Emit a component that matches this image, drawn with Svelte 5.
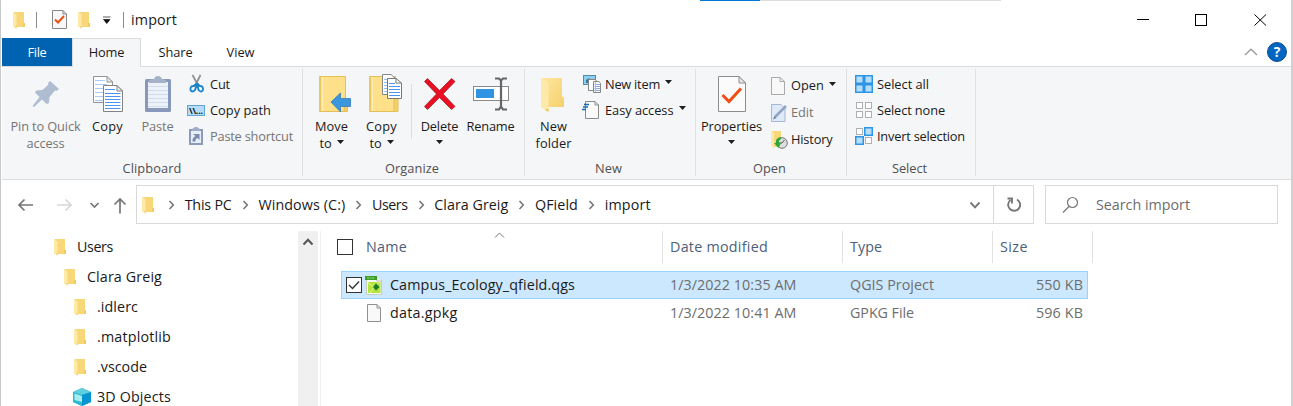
<script>
  // Spreads a label over its design width so columns and buttons line up.
  function fit(node, width) {
    const natural = node.getBoundingClientRect().width;
    const gaps = Math.max(1, node.textContent.length);
    node.style.letterSpacing = `${(width - natural) / gaps}px`;
    node.style.width = `${width}px`;
  }

  const tabs = [
    { t: 'File', w: 19, box: 70, cls: 'file' },
    { t: 'Home', w: 35.5, box: 69, cls: 'home' },
    { t: 'Share', w: 34, box: 69, cls: '' },
    { t: 'View', w: 28, box: 61, cls: '' }
  ];

  const groups = [
    {
      name: 'Clipboard', w: 59, box: 301, pad: 5, gap: 5,
      big: [
        { icon: 'pin', box: 76, lines: [['Pin to Quick', 70], ['access', 38]], off: true },
        { icon: 'copy', box: 48, lines: [['Copy', 31]] },
        { icon: 'paste', box: 52, lines: [['Paste', 32]], off: true }
      ],
      small: [
        { icon: 'cut', t: 'Cut', w: 20 },
        { icon: 'path', t: 'Copy path', w: 61 },
        { icon: 'shortcut', t: 'Paste shortcut', w: 83, off: true }
      ]
    },
    {
      name: 'Organize', w: 54, box: 222, pad: 3, gap: 0,
      big: [
        { icon: 'move', box: 50, lines: [['Move', 33], ['to', 12]], drop: true },
        { icon: 'copyto', box: 50, lines: [['Copy', 31], ['to', 12]], drop: true, rule: true },
        { icon: 'delete', box: 54, lines: [['Delete', 37.5]], drop: true },
        { icon: 'rename', box: 48, lines: [['Rename', 48]] }
      ],
      small: []
    },
    {
      name: 'New', w: 27, box: 171, pad: 3, gap: 5,
      big: [{ icon: 'folder', box: 50, lines: [['New', 27], ['folder', 36]] }],
      small: [
        { icon: 'newitem', t: 'New item', w: 55, drop: true },
        { icon: 'easy', t: 'Easy access', w: 68.5, drop: true }
      ]
    },
    {
      name: 'Open', w: 33, box: 151, pad: 2, gap: 5, pitch: 27, shift: 1,
      big: [{ icon: 'props', box: 66, lines: [['Properties', 61]], drop: true }],
      small: [
        { icon: 'page', t: 'Open', w: 33, drop: true },
        { icon: 'edit', t: 'Edit', w: 22.5, off: true },
        { icon: 'history', t: 'History', w: 41.5 }
      ]
    },
    {
      name: 'Select', w: 35, box: 129, pad: 0, gap: 8,
      big: [],
      small: [
        { icon: 'all', t: 'Select all', w: 52 },
        { icon: 'none', t: 'Select none', w: 68 },
        { icon: 'invert', t: 'Invert selection', w: 88 }
      ]
    }
  ];

  const crumbs = [
    ['This PC', 47], ['Windows (C:)', 87], ['Users', 35.5],
    ['Clara Greig', 74], ['QField', 43], ['import', 46]
  ];

  const tree = [
    { t: 'Users', w: 36, indent: 47 },
    { t: 'Clara Greig', w: 75, indent: 57 },
    { t: '.idlerc', w: 41, indent: 67 },
    { t: '.matplotlib', w: 74, indent: 67 },
    { t: '.vscode', w: 50, indent: 67 },
    { t: '3D Objects', w: 74, indent: 67, cube: true }
  ];

  const files = [
    { name: ['Campus_Ecology_qfield.qgs', 185], date: '1/3/2022 10:35 AM', type: ['QGIS Project', 84], size: '550 KB', on: true },
    { name: ['data.gpkg', 67.5], date: '1/3/2022 10:41 AM', type: ['GPKG File', 64], size: '596 KB' }
  ];
</script>

{#snippet miniFolder()}
  <svg class="mini" width="20" height="20" viewBox="0 0 20 20">
    <path d="M6 2H16V14H17V17H6Z" fill="#f8d778" />
    <path d="M15 13h2v4h-2z" fill="#f1cb60" />
    <path d="M5 2L8.5 4.5V18.5L5 16.5Z" fill="#ffe9a6" />
    <path d="M7 17L8.5 18.7V16Z" fill="#eec65e" />
  </svg>
{/snippet}

{#snippet arrow()}
  <svg class="arrow" width="7" height="4" viewBox="0 0 7 4"><path d="M0 0H7L3.5 4Z" fill="#1e1e1e" /></svg>
{/snippet}

{#snippet chevron()}
  <svg class="chev" width="26.7" height="12" viewBox="0 0 26.7 12"><path d="M11.500 2L15.300 6L11.500 10" fill="none" stroke="#777" stroke-width="1.600" /></svg>
{/snippet}

{#snippet bigIcon(name)}
  <svg class="bigicon" width="40" height="37" viewBox="0 0 40 37">
    {#if name === 'pin'}
      <path d="M25 6L34 14L31.500 16L30 15.500L24.500 22L24 28L21.500 29L17 24.500L9 32L7.500 31L14.500 22L10 17.500L11 15.500L17.500 15L23.500 9.500L23 8Z" fill="#aebdd2" />
    {:else if name === 'copy'}
      <path d="M6.500 1.500H20L25.500 7V27.500H6.500Z" fill="#fff" stroke="#949494" />
      <path d="M8 5.500H18M8 9.500H20M8 13.500H18M8 17.500H18M8 21.500H18M8 25.500H18" stroke="#a9c9f7" />
      <path d="M20 1.500V7H25.500Z" fill="#eee" stroke="#949494" />
      <path d="M16.500 10.500H30L35.500 16V36.500H16.500Z" fill="#fff" stroke="#838383" />
      <path d="M18 14.500H28M18 18.500H33.500M18 21.500H33.500M18 24.500H33.500M18 27.500H33.500M18 30.500H33.500M18 33.500H33.500" stroke="#4e94ee" />
      <path d="M30 10.500V16H35.500Z" fill="#eee" stroke="#838383" />
    {:else if name === 'paste'}
      <rect x="8" y="4" width="26" height="33" rx="1.500" fill="#8798ba" />
      <path d="M11 7H31V33H11Z" fill="#edf2fa" />
      <path d="M11 11.500H31M11 15.500H31M11 19.500H31M11 23.500H31M11 27.500H31M11 31.500H31" stroke="#cfddec" />
      <path d="M12 8V5L17 4Q18 1 21 1T25 4L29 5V8Z" fill="#a5b2c9" />
    {:else if name === 'move' || name === 'copyto'}
      <path d="M8.500 1.500H34.500V36.500H8.500Z" fill="#ffe08a" stroke="#e4bf55" />
      <path d="M11.500 2V36" stroke="#fff0b8" />
      <path d="M9 1.500V36.500" stroke="#ecc75e" stroke-width="2" />
      {#if name === 'move'}
        <path d="M34 24H36.500V36.500H33Z" fill="#f5cf69" stroke="#e4bf55" />
        <path d="M20 27L29.500 18V23.500H39.500V31.500H29.500V37Z" fill="#3a96dd" stroke="#327fbd" stroke-width=".8" />
      {:else}
        <path d="M33 36.500V25Q35 22 37 24V36.500Z" fill="#f5cf69" stroke="#e4bf55" />
      {/if}
    {:else if name === 'delete'}
      <path d="M5.500 6.500L8.500 3.500L20.500 15.500L32.500 3.500L36 6.500L24 19L36 31.500L32.500 34.500L20.500 22.500L8.500 34.500L5.500 31.500L17.500 19Z" fill="#e81123" stroke="#a60b17" stroke-width=".7" />
    {:else if name === 'rename'}
      <rect x="3.500" y="11.500" width="35" height="14" fill="#fff" stroke="#8a8a8a" />
      <rect x="6" y="14" width="18" height="9" fill="#3094e3" />
      <path d="M25 3.500H29L31 5.500L33 3.500H37M31 5V32M25 34.500H29L31 31.500L33 34.500H37" fill="none" stroke="#666" stroke-width="2.200" />
    {:else if name === 'folder'}
      <defs><linearGradient id="fold" x2="1" y2="1"><stop stop-color="#ffe8a2" /><stop offset="1" stop-color="#f5cf6b" /></linearGradient></defs>
      <path d="M9 3H29V21L31 23V32H9Z" fill="url(#fold)" />
      <path d="M8 3L15.500 8V37L8 32.500Z" fill="#ffe9a8" />
      <path d="M12 35L15.500 37V33Z" fill="#edc767" />
    {:else if name === 'props'}
      <path d="M7.500 1.500H28L34.500 8V36.500H7.500Z" fill="#fbfbfb" stroke="#8d8d8d" />
      <path d="M28 1.500V8H34.500Z" fill="#e8e8e8" stroke="#8d8d8d" />
      <path d="M11.500 20L18 26.500L30 13.500" fill="none" stroke="#f04e12" stroke-width="3" />
    {/if}
    {#if name === 'copyto'}
      <path d="M21.500 -.5H30L35 4V19.500H21.500Z" fill="#fff" stroke="#888" />
      <path d="M23 4.500H28M23 7.500H26M23 10.500H26M23 13.500H26M23 16.500H26" stroke="#94bff5" />
      <path d="M26.500 3.500H35L40.500 8V23.500H26.500Z" fill="#fff" stroke="#777" />
      <path d="M28 8.500H34M28 11.500H39M28 14.500H39M28 17.500H39M28 20.500H39" stroke="#4e94ee" />
      <path d="M35 3.500V8H40.500" fill="none" stroke="#777" />
    {/if}
  </svg>
{/snippet}

{#snippet smallIcon(name)}
  <svg class="smallicon" width="18" height="18" viewBox="0 0 18 18">
    {#if name === 'cut'}
      <path d="M4.500 0L11 12M12.500 0L6.500 12" stroke="#929292" stroke-width="1.800" />
      <path d="M9 8.500L5.500 11Q2 11 2.500 15Q4 18 7 15Q8 12 9 10Q10 12 10.500 15Q13 18 15 15Q15.500 11 12 11Z" fill="none" stroke="#1683ce" stroke-width="1.800" />
    {:else if name === 'path'}
      <rect x="-.5" y="4.500" width="17" height="10" fill="#b5ddfb" stroke="#62a3d4" />
      <text x="1" y="12.500" font-size="9" font-weight="700" textLength="14" fill="#111">\\...</text>
    {:else if name === 'shortcut'}
      <path d="M1 2H15V18H1Z" fill="#8c9bb9" /><path d="M3 4H13V16H3Z" fill="#e8eef7" />
      <path d="M4 4V2L7 0H9L12 2V4Z" fill="#a0aec8" />
      <path d="M5 7H11.500V13L9.500 11Q7 12 7.500 14.500H4.500Q4 11 7.500 9Z" fill="#798aae" />
    {:else if name === 'newitem'}
      <rect x=".5" y=".5" width="12" height="9" fill="#8fd0ef" stroke="#4e8da8" /><path d="M3 8V5L6 3L9 8Z" fill="#2e7d93" />
      <path d="M5.500 4.500H12L14 6.500V15.500H5.500Z" fill="#fff" stroke="#888" />
      <path d="M10.500 6.500H16L17.500 8.500V17.500H10.500Z" fill="#fff" stroke="#888" />
      <path d="M11.500 9.500H17M11.500 11.500H17M11.500 13.500H17M11.500 15.500H17" stroke="#8ca9e9" /><path d="M12.500 7V17" stroke="#f3a7a7" />
    {:else if name === 'easy'}
      <path d="M2.500 .5H12L15.500 4V17.500H2.500Z" fill="#fafafa" stroke="#8b8b8b" /><path d="M12 .5V4H15.500" fill="none" stroke="#8b8b8b" />
      <path d="M1 3.500H6M0 6H5M-1 8.500H3" stroke="#1769b5" stroke-width="1.400" />
    {:else if name === 'page'}
      <path d="M2.500 .5H11L15.500 4.500V17.500H2.500Z" fill="#f8f8f8" stroke="#aaa" /><path d="M11 .5V4.500H15.500" fill="none" stroke="#aaa" />
    {:else if name === 'edit'}
      <path d="M2.500 .5H12L16 4.500V17.500H2.500Z" fill="#dfe9f7" stroke="#a6b7d0" /><path d="M6 13L17 2" stroke="#91a4c4" stroke-width="2.500" /><path d="M4 15.500L7.500 14L5.500 12Z" fill="#6d83aa" />
    {:else if name === 'history'}
      <path d="M3 0H12V16H3Z" fill="#f8d778" /><path d="M2 0L5 2V17L2 15Z" fill="#ffe9a6" />
      <circle cx="13" cy="12" r="5.300" fill="#ddd" stroke="#777" /><path d="M13 12L15.500 9M13 12H10" stroke="#555" />
      <path d="M12 6Q6 7 7 12L5 12L9.500 17L12 12H10Q9.500 9 12 8Z" fill="#2aa63a" />
    {:else}
      {#each [0, 1, 2, 3] as i}
        {@const on = name === 'all' || (name === 'invert' && (i === 1 || i === 2))}
        <rect x={(i % 2) * 9 + (on ? 0.75 : 1.5)} y={Math.floor(i / 2) * 9 + (on ? 0.75 : 1.5)} width={on ? 7.5 : 6} height={on ? 7.5 : 6} fill={on ? '#b5dffd' : '#fff'} stroke={on ? '#2e94e4' : '#b0b0b0'} stroke-width={on ? 1.5 : 1} />
      {/each}
    {/if}
  </svg>
{/snippet}

<div class="window">
  <i class="accent"></i>
  <header class="title">
    {@render miniFolder()}
    <i class="bar b1"></i>
    <svg class="check" width="15" height="19" viewBox="0 0 15 19">
      <path d="M.5 .5H11L14.500 4V18.500H.5Z" fill="#f8f8f8" stroke="#888" /><path d="M11 .5V4H14.500" fill="none" stroke="#888" />
      <path d="M3 9.500L6 12.500L12 6" fill="none" stroke="#f04e12" stroke-width="2" />
    </svg>
    {@render miniFolder()}
    <svg class="custom" width="8" height="8" viewBox="0 0 8 8"><path d="M0 1H7.500M.5 3.500H7L3.800 7.500Z" fill="#111" stroke="#111" stroke-width=".7" /></svg>
    <i class="bar b2"></i>
    <span class="t" use:fit={46}>import</span>
    <svg class="controls" width="140" height="20" viewBox="0 0 140 20" fill="none" stroke="#000">
      <path d="M7 9.500H19M124.500 4.500L136 15.500M136 4.500L124.500 15.500" /><rect x="65.500" y="4.500" width="11" height="11" />
    </svg>
  </header>

  <nav class="tabs">
    {#each tabs as tab}
      <div class="tab {tab.cls}" style="width:{tab.box}px"><span class="r" use:fit={tab.w}>{tab.t}</span></div>
    {/each}
    <div class="help">
      <svg width="14" height="8" viewBox="0 0 14 8"><path d="M1 7L7 1.200L13 7" fill="none" stroke="#9a9a9a" stroke-width="1.300" /></svg>
      <b>?</b>
    </div>
  </nav>

  <section class="ribbon">
    {#each groups as g}
      <div class="group" style="width:{g.box}px">
        <div class="tools" style="padding-left:{g.pad}px">
          {#each g.big as b}
            <div class="big" class:off={b.off} style="width:{b.box}px">
              {@render bigIcon(b.icon)}
              {#each b.lines as [text, w], i}
                <div class="line">
                  <span class="r" use:fit={w}>{text}</span>
                  {#if b.drop && i === 1}{@render arrow()}{/if}
                </div>
              {/each}
              {#if b.drop && b.lines.length === 1}<div class="line alone">{@render arrow()}</div>{/if}
            </div>
            {#if b.rule}<i class="rule"></i>{/if}
          {/each}
          <div class="smalls" style="padding-left:{g.gap}px;padding-top:{2 + (g.shift ?? 0)}px">
            {#each g.small as s}
              <div class="small" class:off={s.off} style="height:{g.pitch ?? 26}px">
                {@render smallIcon(s.icon)}
                <span class="r" use:fit={s.w}>{s.t}</span>
                {#if s.drop}{@render arrow()}{/if}
              </div>
            {/each}
          </div>
        </div>
        <div class="caption"><span class="r" use:fit={g.w}>{g.name}</span></div>
      </div>
    {/each}
  </section>

  <section class="address">
    <svg class="navs" width="122" height="20" viewBox="0 0 122 20" fill="none" stroke="#767676" stroke-width="1.700">
      <path d="M17 10H31M22.500 4.500L17 10L22.500 15.500" />
      <path d="M55 10H69M63.500 4.500L69 10L63.500 15.500" stroke="#d7d7d7" />
      <path d="M88.500 8L92.500 12L96.500 8" />
      <path d="M118 18.500V4M112.500 9.500L118 4L123.500 9.500" />
    </svg>
    <div class="pathbox">
      {@render miniFolder()}
      {#each crumbs as [text, w]}
        {@render chevron()}<span class="t" use:fit={w}>{text}</span>
      {/each}
      <svg class="drop" width="12" height="8" viewBox="0 0 12 8"><path d="M1.500 1.500L6 6.300L10.500 1.500" fill="none" stroke="#777" stroke-width="1.900" /></svg>
      <div class="refresh">
        <svg width="16" height="18" viewBox="0 0 16 18" fill="none" stroke="#777" stroke-width="1.900"><path d="M11 3.500A6 6 0 1 1 4.500 4M1.500 2.500H6V7.500" /></svg>
      </div>
    </div>
    <div class="search">
      <svg width="17" height="18" viewBox="0 0 17 18" fill="none" stroke="#777" stroke-width="1.200"><circle cx="10.500" cy="6.500" r="5" /><path d="M7 10.500L1 16.500" /></svg>
      <span class="t" use:fit={94}>Search import</span>
    </div>
  </section>

  <main>
    <aside>
      <div class="tree">
        {#each tree as n}
          <div class="node" style="padding-left:{n.indent}px">
            {#if n.cube}
              <svg class="cube" width="20" height="20" viewBox="0 0 20 20">
                <path d="M1 5L10 1L19 5V15L10 19L1 15Z" fill="#1cb1d1" /><path d="M1 5L10 1L19 5L10 8Z" fill="#5fd0e0" /><path d="M10 8L19 5V15L10 19Z" fill="#0795d2" /><path d="M1 5L10 8V19L1 15Z" fill="#2bbbd3" /><path d="M2.500 6.500L10 9V15L2.500 13Z" fill="#a9ecf0" />
              </svg>
            {:else}{@render miniFolder()}{/if}
            <span class="t" use:fit={n.w}>{n.t}</span>
          </div>
        {/each}
      </div>
      <div class="scroll"><svg width="12" height="8" viewBox="0 0 12 8"><path d="M1.500 6.500L6 1.800L10.500 6.500" fill="none" stroke="#555" stroke-width="2" /></svg></div>
    </aside>
    <div class="list">
      <div class="head">
        <div class="c1"><i class="box"></i><span class="t" use:fit={41}>Name</span>
          <svg class="sort" width="11" height="6" viewBox="0 0 11 6"><path d="M1 5.500L5.500 1L10 5.500" fill="none" stroke="#777" /></svg>
        </div>
        <div class="c2"><span class="t" use:fit={98}>Date modified</span></div>
        <div class="c3"><span class="t" use:fit={32}>Type</span></div>
        <div class="c4"><span class="t" use:fit={28}>Size</span></div>
      </div>
      {#each files as f}
        <div class="file-row" class:on={f.on}>
          <div class="name">
            <i class="box" class:hidden={!f.on}>{#if f.on}<svg width="14" height="14" viewBox="0 0 14 14"><path d="M2 7L5.500 10.500L12 3.500" fill="none" stroke="#333" stroke-width="1.400" /></svg>{/if}</i>
            <svg class="ficon" width="18" height="20" viewBox="0 0 18 20">
              {#if f.on}
                <path d="M1.500 1.500H12L16.500 6V19.500H1.500Z" fill="#f7f9f5" stroke="#c5ccc1" /><path d="M12 1.500V6H16.500" fill="#fff" stroke="#bbb" />
                <path d="M0 1H12V5H0Z" fill="#3b9f24" /><path d="M2 3H10" stroke="#9fd58f" stroke-dasharray="2 .6" />
                <path d="M3 7H15.500V18H3Z" fill="#b7e33d" /><path d="M3 8L9 12L5 18M9 12L15 7" stroke="#dff59c" fill="none" />
                <path d="M11 8.500L14.500 12L11 15.500L8 12Z" fill="#188024" />
              {:else}
                <path d="M2.500 1.500H12L15.500 5V18.500H2.500Z" fill="#f9f9f9" stroke="#909090" /><path d="M12 1.500V5H15.500" fill="none" stroke="#909090" />
              {/if}
            </svg>
            <span class="t" use:fit={f.name[1]}>{f.name[0]}</span>
          </div>
          <div class="date"><span class="t" use:fit={126.5}>{f.date}</span></div>
          <div class="type"><span class="t" use:fit={f.type[1]}>{f.type[0]}</span></div>
          <div class="size"><span class="t" use:fit={47}>{f.size}</span></div>
        </div>
      {/each}
    </div>
  </main>
</div>

<style>
  :global(body) { background: #fff; overflow: hidden; }
  .window { box-sizing: border-box; position: relative; width: 1293px; height: 406px; overflow: hidden; display: flex; flex-direction: column; background: #fff; border-left: 1px solid #c9c9c9; border-right: 2px solid #d0d0d0; padding-left: 1px; font-family: "Open Sans", "Noto Sans", sans-serif; color: #1a1a1a; }
  svg { flex: none; display: block; }
  .accent { position: absolute; top: 0; left: 699px; width: 301px; height: 1px; background: linear-gradient(90deg, #0078d7 60px, #ddd 60px); }
  .t, .r { display: inline-block; white-space: nowrap; flex: none; }
  .t { font-size: 14.3px; line-height: 20px; }
  .r { font-size: 12.8px; line-height: 17px; }
  i { flex: none; display: block; }

  .title { height: 38px; flex: none; display: flex; align-items: center; padding-left: 6px; padding-top: 1px; box-sizing: border-box; }
  .bar { width: 1px; height: 16px; background: #8b8b8b; }
  .b1 { margin-left: 8px; }
  .check { margin: 0 6px 0 15px; }
  .custom { margin-left: 10px; }
  .b2 { margin: 0 7px 0 12px; }
  .controls { margin-left: auto; margin-right: 21px; }

  .tabs { height: 28px; flex: none; display: flex; }
  .tab { box-sizing: border-box; display: flex; align-items: center; justify-content: center; padding-top: 1px; }
  .tab.file { background: #0063b1; color: #fff; }
  .tab.home { background: #f5f6f7; border: 1px solid #dadbdc; border-bottom: 0; height: 29px; z-index: 1; padding: 0 0 1px; }
  .help { margin-left: auto; display: flex; align-items: center; gap: 9px; padding-right: 4px; }
  .help b { width: 18px; height: 18px; border-radius: 50%; background: #0066c4; border: 1px solid #174f86; color: #fff; font-size: 14px; line-height: 18px; text-align: center; }

  .ribbon { height: 112px; flex: none; display: flex; background: #f5f6f7; border-top: 1px solid #dadbdc; border-bottom: 1px solid #dadbdc; }
  .group { box-sizing: border-box; margin: 2px 0 3px; border-right: 1px solid #e0e1e2; display: flex; flex-direction: column; flex: none; }
  .tools { display: flex; height: 92px; flex: none; }
  .big { flex: none; display: flex; flex-direction: column; align-items: center; padding-top: 6px; }
  .bigicon { margin-bottom: 6px; overflow: visible; }
  .line { height: 17px; display: flex; align-items: center; justify-content: center; gap: 5px; padding-left: 1px; }
  .line .arrow { margin-bottom: 3px; }
  .off { color: #757575; }
  .rule { width: 1px; height: 55px; background: #dcdddf; margin: 15px 0 0 5px; }
  .small { display: flex; align-items: center; gap: 4px; }
  .small .arrow { margin-left: 1px; margin-bottom: 4px; }
  .smallicon { overflow: visible; }
  .smalls { box-sizing: border-box; }
  .caption { height: 15px; display: flex; align-items: center; justify-content: center; color: #505050; }
  .group + .group .caption { padding-right: 3px; }

  .address { height: 51px; flex: none; display: flex; box-sizing: border-box; padding-top: 5px; }
  .navs { margin: 10px 12px 0 0; overflow: visible; }
  .pathbox, .search { box-sizing: border-box; height: 39px; border: 1px solid #d9d9d9; display: flex; align-items: center; }
  .pathbox { width: 898px; }
  .pathbox .mini { margin-right: 1px; }
  .drop { margin-left: auto; margin-right: 12px; }
  .refresh { width: 39px; height: 37px; border-left: 1px solid #d9d9d9; display: flex; align-items: center; justify-content: center; }
  .search { width: 233px; margin-left: 11px; padding-left: 16px; gap: 17px; color: #6d6d6d; }

  main { flex: 1; display: flex; min-height: 0; }
  aside { width: 319px; flex: none; display: flex; border-right: 1px solid #f0f0f0; box-sizing: border-box; }
  .tree { width: 296px; padding-top: 1px; }
  .node { height: 30px; display: flex; align-items: center; gap: 8px; box-sizing: border-box; }
  .cube { margin: 0 -3px 0 3px; }
  .scroll { width: 20px; background: #f0f0f0; display: flex; justify-content: center; padding-top: 7px; box-sizing: border-box; }
  .list { flex: 1; }
  .head { display: flex; height: 32px; margin-bottom: 8px; color: #4c607a; }
  .head > div { box-sizing: border-box; border-right: 1px solid #e2e2e2; display: flex; align-items: center; padding-left: 7px; }
  .head .c1 { width: 342px; padding-left: 16px; position: relative; }
  .c1 .t { margin-left: 13px; }
  .sort { position: absolute; left: 173px; top: 1px; }
  .c2 { width: 180px; }
  .c3 { width: 150px; }
  .c4 { width: 100px; }
  .box { width: 14px; height: 14px; border: 1px solid #333; background: #fff; }
  .hidden { visibility: hidden; }
  .file-row { box-sizing: border-box; width: 747px; height: 28px; margin-left: 20px; display: flex; align-items: center; border: 1px solid transparent; color: #6d6d6d; }
  .file-row > div { display: flex; align-items: center; }
  .file-row.on { background: #cce8ff; border-color: #99d1ff; }
  .file-row + .file-row { height: 27px; }
  .file-row .name { width: 328px; padding-left: 4px; box-sizing: border-box; color: #1a1a1a; }
  .ficon { margin: 0 7px 0 3px; }
  .date { width: 180px; }
  .type { width: 150px; }
  .size { flex: 1; justify-content: flex-end; padding-right: 4px; }
</style>
